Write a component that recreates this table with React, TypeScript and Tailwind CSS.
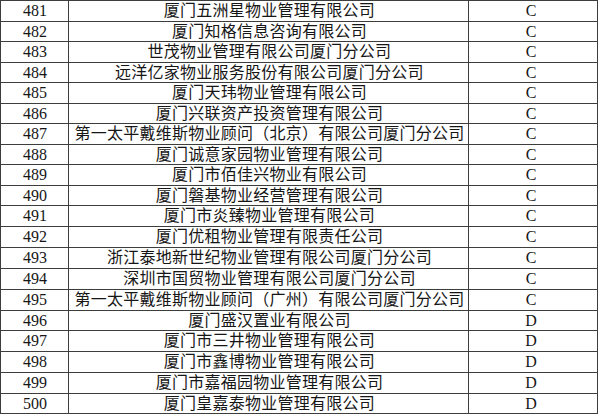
import React from "react";

type Row = { n: number; name: string; g: string; h: string };

const rows: Row[] = [
  { n: 481, name: "厦门五洲星物业管理有限公司", g: "C", h: "h-[21px]" },
  { n: 482, name: "厦门知格信息咨询有限公司", g: "C", h: "h-[20px]" },
  { n: 483, name: "世茂物业管理有限公司厦门分公司", g: "C", h: "h-[21px]" },
  { n: 484, name: "远洋亿家物业服务股份有限公司厦门分公司", g: "C", h: "h-[20px]" },
  { n: 485, name: "厦门天玮物业管理有限公司", g: "C", h: "h-[21px]" },
  { n: 486, name: "厦门兴联资产投资管理有限公司", g: "C", h: "h-[20px]" },
  { n: 487, name: "第一太平戴维斯物业顾问（北京）有限公司厦门分公司", g: "C", h: "h-[21px]" },
  { n: 488, name: "厦门诚意家园物业管理有限公司", g: "C", h: "h-[20px]" },
  { n: 489, name: "厦门市佰佳兴物业有限公司", g: "C", h: "h-[21px]" },
  { n: 490, name: "厦门磐基物业经营管理有限公司", g: "C", h: "h-[20px]" },
  { n: 491, name: "厦门市炎臻物业管理有限公司", g: "C", h: "h-[21px]" },
  { n: 492, name: "厦门优租物业管理有限责任公司", g: "C", h: "h-[21px]" },
  { n: 493, name: "浙江泰地新世纪物业管理有限公司厦门分公司", g: "C", h: "h-[21px]" },
  { n: 494, name: "深圳市国贸物业管理有限公司厦门分公司", g: "C", h: "h-[21px]" },
  { n: 495, name: "第一太平戴维斯物业顾问（广州）有限公司厦门分公司", g: "C", h: "h-[21px]" },
  { n: 496, name: "厦门盛汉置业有限公司", g: "D", h: "h-[20px]" },
  { n: 497, name: "厦门市三井物业管理有限公司", g: "D", h: "h-[21px]" },
  { n: 498, name: "厦门市鑫博物业管理有限公司", g: "D", h: "h-[21px]" },
  { n: 499, name: "厦门市嘉福园物业管理有限公司", g: "D", h: "h-[21px]" },
  { n: 500, name: "厦门皇嘉泰物业管理有限公司", g: "D", h: "h-[20px]" },
];

export default function App() {
  return (
    <div className="w-[600px] h-[414px] bg-white overflow-hidden">
      <div
        className="w-[598px] border-l border-t border-[#3d3d3d] text-[#161616] text-[16px] leading-none"
        style={{ fontFamily: '"Liberation Serif", "Noto Sans CJK SC", serif' }}
      >
        {rows.map((r) => (
          <div key={r.n} className={`flex ${r.h} border-b border-[#3d3d3d]`}>
            <div className="w-[68px] shrink-0 border-r border-[#3d3d3d] flex items-center justify-center pl-[1px]">
              {r.n}
            </div>
            <div className="w-[400px] shrink-0 border-r border-[#3d3d3d] flex items-center justify-center tracking-[0.25px] pl-[2px]">
              {r.name}
            </div>
            <div className="w-[129px] shrink-0 border-r border-[#3d3d3d] flex items-center justify-center pr-[4px]">
              {r.g}
            </div>
          </div>
        ))}
      </div>
    </div>
  );
}
